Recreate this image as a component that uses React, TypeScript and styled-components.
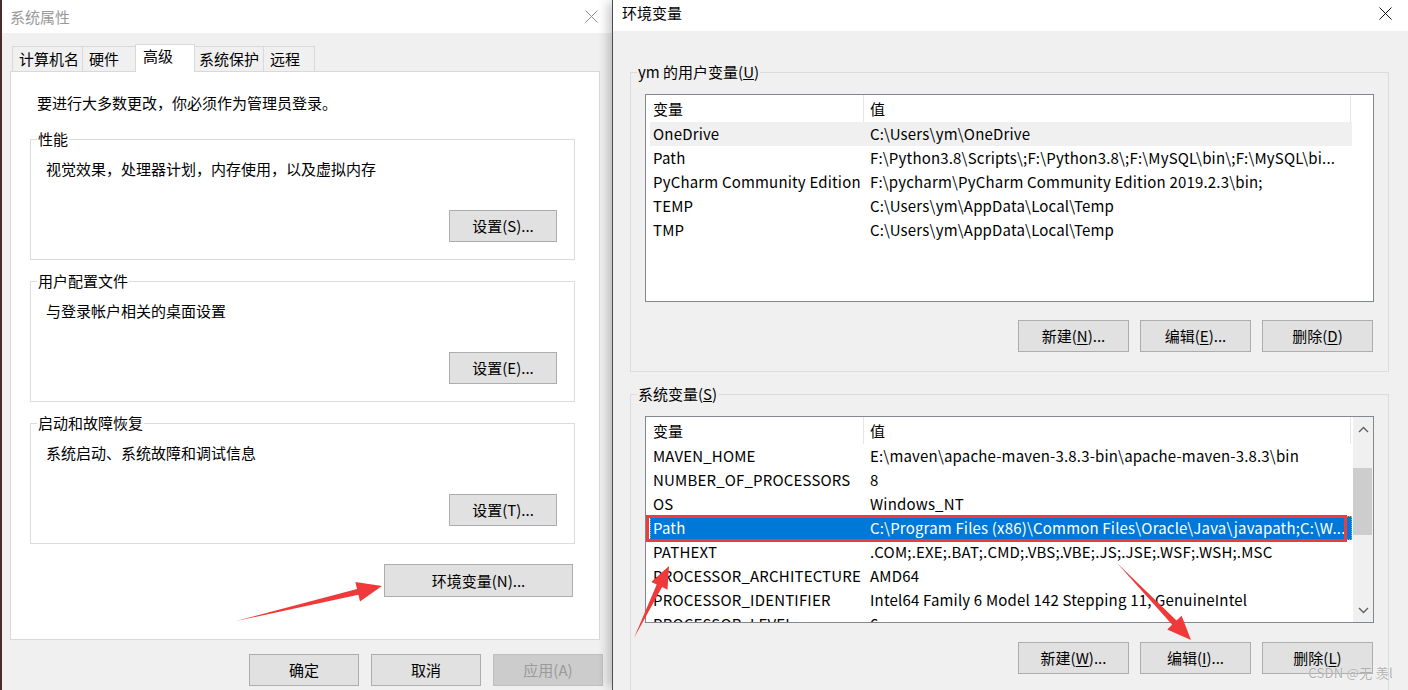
import React from 'react'
import styled, { createGlobalStyle } from 'styled-components'

const GlobalStyle = createGlobalStyle`
  html, body {
    margin: 0;
    padding: 0;
  }
  body {
    width: 1408px;
    height: 690px;
    overflow: hidden;
    background: #4b2a2a;
    font-family: 'Segoe UI', 'Noto Sans CJK SC', sans-serif;
    font-size: 15px;
    color: #000;
  }
  * {
    box-sizing: border-box;
  }
`

const Desktop = styled.div`
  position: relative;
  display: flex;
  width: 1408px;
  height: 690px;
  overflow: hidden;
  padding-left: 2px;
  background: #4b2a2a;
`

const Window = styled.div<{ $width: number; $front?: boolean }>`
  flex: none;
  width: ${({ $width }) => $width}px;
  height: 690px;
  display: flex;
  flex-direction: column;
  background: #f0f0f0;
  ${({ $front }) =>
    $front &&
    `
    border-left: 1px solid #4d4d4d;
    box-shadow: -6px 0 10px -2px rgba(0, 0, 0, 0.22);
  `}
`

const TitleBar = styled.div<{ $height: number; $padLeft: number; $padRight: number; $lift: number }>`
  flex: none;
  height: ${({ $height }) => $height}px;
  background: #fff;
  display: flex;
  align-items: center;
  justify-content: space-between;
  padding: 0 ${({ $padRight }) => $padRight}px ${({ $lift }) => $lift}px
    ${({ $padLeft }) => $padLeft}px;
`

const TitleText = styled.span<{ $inactive?: boolean }>`
  font-size: 15px;
  line-height: 20px;
  color: ${({ $inactive }) => ($inactive ? '#999999' : '#000')};
`

const CloseIcon = ({ color }: { color: string }) => (
  <svg width="13" height="13" viewBox="0 0 13 13">
    <path d="M0.5 0.5 L12.5 12.5 M12.5 0.5 L0.5 12.5" stroke={color} strokeWidth="1" fill="none" />
  </svg>
)

/* ---------- left dialog ---------- */

const LeftBody = styled.div`
  flex: 1;
  display: flex;
  flex-direction: column;
  padding-left: 8px;
`

const TabStrip = styled.div`
  display: flex;
  align-items: flex-end;
  height: 27px;
  margin: 11px 0 0 2px;
`

const Tab = styled.div<{ $width: number; $active?: boolean }>`
  flex: none;
  position: relative;
  width: ${({ $width, $active }) => ($active ? $width + 4 : $width)}px;
  height: ${({ $active }) => ($active ? 28 : 25)}px;
  margin: 0 ${({ $active }) => ($active ? -2 : 0)}px ${({ $active }) => ($active ? -1 : 0)}px;
  margin-left: ${({ $active }) => ($active ? -2 : -1)}px;
  padding: ${({ $active }) => ($active ? '1px 0 0 7px' : '2px 0 0 6px')};
  border: 1px solid #d9d9d9;
  border-bottom: none;
  background: ${({ $active }) => ($active ? '#fff' : '#f0f0f0')};
  z-index: ${({ $active }) => ($active ? 2 : 1)};
  font-size: 15px;
  line-height: 20px;
  white-space: nowrap;
  &:first-child {
    margin-left: 0;
  }
`

const TabPanel = styled.div`
  width: 590px;
  height: 569px;
  border: 1px solid #d9d9d9;
  background: #fff;
  display: flex;
  flex-direction: column;
  padding: 21px 24px 0 19px;
`

const Intro = styled.div`
  margin-left: 7px;
  line-height: 20px;
`

const GroupBox = styled.fieldset<{ $width: number; $gap: number }>`
  margin: ${({ $gap }) => $gap}px 0 0;
  padding: 0;
  min-width: 0;
  width: ${({ $width }) => $width}px;
  border: 1px solid #dcdcdc;
  flex: none;
`

const GroupLegend = styled.legend`
  margin-left: 6px;
  padding: 0 1px;
  line-height: 20px;
  font-size: 15px;
`

const GroupInner = styled.div<{ $pad: string }>`
  display: flex;
  flex-direction: column;
  padding: ${({ $pad }) => $pad};
`

const Description = styled.div`
  line-height: 20px;
`

const Button = styled.button<{ $width: number; $height?: number; $gapTop?: number }>`
  flex: none;
  width: ${({ $width }) => $width}px;
  height: ${({ $height }) => $height ?? 32}px;
  margin-top: ${({ $gapTop }) => $gapTop ?? 0}px;
  background: #e1e1e1;
  border: 1px solid #adadad;
  border-radius: 0;
  padding: 0;
  font-family: inherit;
  font-size: 15px;
  line-height: 20px;
  color: #000;
  &:disabled {
    background: #cccccc;
    border-color: #bfbfbf;
    color: #9a9a9a;
  }
  u {
    text-decoration-thickness: 1px;
    text-underline-offset: 2px;
  }
`

const RightAligned = styled.div<{ $gapTop: number; $right: number; $gap?: number }>`
  display: flex;
  justify-content: flex-end;
  gap: ${({ $gap }) => $gap ?? 0}px;
  margin-top: ${({ $gapTop }) => $gapTop}px;
  padding-right: ${({ $right }) => $right}px;
`

/* ---------- right dialog ---------- */

const RightBody = styled.div`
  flex: 1;
  display: flex;
  flex-direction: column;
  padding: 31px 0 0 17px;
`

const ListView = styled.div<{ $height: number }>`
  flex: none;
  width: 729px;
  height: ${({ $height }) => $height}px;
  border: 1px solid #828790;
  background: #fff;
  display: flex;
  overflow: hidden;
`

const ListRows = styled.div`
  width: 706px;
  padding-left: 4px;
  overflow: hidden;
`

const Row = styled.div<{ $header?: boolean; $state?: 'hover' | 'selected' }>`
  position: relative;
  display: grid;
  grid-template-columns: 214px 487px;
  height: ${({ $header }) => ($header ? 27 : 24)}px;
  align-items: center;
  background: ${({ $state }) =>
    $state === 'selected' ? '#0078d7' : $state === 'hover' ? '#f0f0f0' : 'transparent'};
  color: ${({ $state }) => ($state === 'selected' ? '#fff' : '#000')};
  ${({ $state }) =>
    $state === 'selected' &&
    `
    outline: 1px dotted #e8a33a;
    outline-offset: -1px;
  `}
`

const Cell = styled.div<{ $header?: boolean; $first?: boolean }>`
  height: 100%;
  display: flex;
  align-items: center;
  padding-left: ${({ $first }) => ($first ? 3 : 6)}px;
  line-height: 20px;
  letter-spacing: ${({ $header }) => ($header ? 0 : 0.18)}px;
  white-space: nowrap;
  overflow: hidden;
  border-right: ${({ $header }) => ($header ? '1px solid #e5e5e5' : 'none')};
`

const Annotation = styled.div`
  position: absolute;
  left: -4px;
  right: 5px;
  top: -1px;
  bottom: -2px;
  border: 3px solid #ef3b3b;
  pointer-events: none;
`

const ScrollBar = styled.div`
  flex: none;
  width: 21px;
  background: #f0f0f0;
  display: flex;
  flex-direction: column;
  border-left: 1px solid #fff;
`

const ScrollArrow = styled.div`
  height: 24px;
  display: flex;
  align-items: center;
  justify-content: center;
`

const ScrollTrack = styled.div`
  flex: 1;
  padding-top: 27px;
`

const Thumb = styled.div`
  width: 19px;
  height: 67px;
  background: #cdcdcd;
`

const Chevron = ({ up }: { up?: boolean }) => (
  <svg width="11" height="7" viewBox="0 0 11 7">
    <path
      d={up ? 'M1 6 L5.5 1.5 L10 6' : 'M1 1 L5.5 5.5 L10 1'}
      stroke="#606060"
      strokeWidth="1.4"
      fill="none"
    />
  </svg>
)

/* ---------- overlays ---------- */

const Overlay = styled.svg`
  position: absolute;
  left: 0;
  top: 0;
  width: 1408px;
  height: 690px;
  pointer-events: none;
  z-index: 10;
`

const Watermark = styled.div`
  position: absolute;
  right: 15px;
  bottom: 8px;
  font-size: 13px;
  line-height: 18px;
  color: rgba(150, 150, 150, 0.75);
  text-shadow: 0 0 1px rgba(255, 255, 255, 0.9);
  letter-spacing: 0.3px;
  z-index: 11;
`

type Variable = { name: string; value: string; state?: 'hover' | 'selected'; marked?: boolean }

const userVars: Variable[] = [
  { name: 'OneDrive', value: 'C:\\Users\\ym\\OneDrive', state: 'hover' },
  { name: 'Path', value: 'F:\\Python3.8\\Scripts\\;F:\\Python3.8\\;F:\\MySQL\\bin\\;F:\\MySQL\\bi...' },
  { name: 'PyCharm Community Edition', value: 'F:\\pycharm\\PyCharm Community Edition 2019.2.3\\bin;' },
  { name: 'TEMP', value: 'C:\\Users\\ym\\AppData\\Local\\Temp' },
  { name: 'TMP', value: 'C:\\Users\\ym\\AppData\\Local\\Temp' },
]

const systemVars: Variable[] = [
  { name: 'MAVEN_HOME', value: 'E:\\maven\\apache-maven-3.8.3-bin\\apache-maven-3.8.3\\bin' },
  { name: 'NUMBER_OF_PROCESSORS', value: '8' },
  { name: 'OS', value: 'Windows_NT' },
  {
    name: 'Path',
    value: 'C:\\Program Files (x86)\\Common Files\\Oracle\\Java\\javapath;C:\\W...',
    state: 'selected',
    marked: true,
  },
  { name: 'PATHEXT', value: '.COM;.EXE;.BAT;.CMD;.VBS;.VBE;.JS;.JSE;.WSF;.WSH;.MSC' },
  { name: 'PROCESSOR_ARCHITECTURE', value: 'AMD64' },
  { name: 'PROCESSOR_IDENTIFIER', value: 'Intel64 Family 6 Model 142 Stepping 11, GenuineIntel' },
  { name: 'PROCESSOR_LEVEL', value: '6' },
]

const VariableList = ({ rows, height, scroll }: { rows: Variable[]; height: number; scroll?: boolean }) => (
  <ListView $height={height}>
    <ListRows>
      <Row $header>
        <Cell $header $first>变量</Cell>
        <Cell $header>值</Cell>
      </Row>
      {rows.map((r) => (
        <Row key={r.name} $state={r.state}>
          <Cell $first>{r.name}</Cell>
          <Cell>{r.value}</Cell>
          {r.marked && <Annotation />}
        </Row>
      ))}
    </ListRows>
    {scroll && (
      <ScrollBar>
        <ScrollArrow>
          <Chevron up />
        </ScrollArrow>
        <ScrollTrack>
          <Thumb />
        </ScrollTrack>
        <ScrollArrow>
          <Chevron />
        </ScrollArrow>
      </ScrollBar>
    )}
  </ListView>
)

const arrow = (tail: [number, number], tip: [number, number], headLen: number, headHalf: number, shaftHalf: number) => {
  const dx = tip[0] - tail[0]
  const dy = tip[1] - tail[1]
  const len = Math.hypot(dx, dy)
  const ux = dx / len
  const uy = dy / len
  const nx = -uy
  const ny = ux
  const bx = tip[0] - ux * headLen
  const by = tip[1] - uy * headLen
  const pts = [
    tail,
    [bx + nx * shaftHalf, by + ny * shaftHalf],
    [bx + nx * headHalf, by + ny * headHalf],
    tip,
    [bx - nx * headHalf, by - ny * headHalf],
    [bx - nx * shaftHalf, by - ny * shaftHalf],
  ]
  return pts.map((p) => p.map((v) => v.toFixed(1)).join(',')).join(' ')
}

const perfGroups = [
  { title: '性能', text: '视觉效果，处理器计划，内存使用，以及虚拟内存', button: '设置(S)...', gap: 16 },
  { title: '用户配置文件', text: '与登录帐户相关的桌面设置', button: '设置(E)...', gap: 11 },
  { title: '启动和故障恢复', text: '系统启动、系统故障和调试信息', button: '设置(T)...', gap: 11 },
]

const tabs = [
  { label: '计算机名', width: 71 },
  { label: '硬件', width: 55 },
  { label: '高级', width: 56, active: true },
  { label: '系统保护', width: 72 },
  { label: '远程', width: 52 },
]

export default function App() {
  return (
    <>
      <GlobalStyle />
      <Desktop>
        <Window $width={610}>
          <TitleBar $height={33} $padLeft={8} $padRight={14} $lift={0}>
            <TitleText $inactive>系统属性</TitleText>
            <CloseIcon color="#8a8a8a" />
          </TitleBar>
          <LeftBody>
            <TabStrip>
              {tabs.map((t) => (
                <Tab key={t.label} $width={t.width} $active={t.active}>
                  {t.label}
                </Tab>
              ))}
            </TabStrip>
            <TabPanel>
              <Intro>要进行大多数更改，你必须作为管理员登录。</Intro>
              {perfGroups.map((g) => (
                <GroupBox key={g.title} $width={545} $gap={g.gap}>
                  <GroupLegend>{g.title}</GroupLegend>
                  <GroupInner $pad="10px 17px 17px 15px">
                    <Description>{g.text}</Description>
                    <RightAligned $gapTop={31} $right={0}>
                      <Button $width={108}>{g.button}</Button>
                    </RightAligned>
                  </GroupInner>
                </GroupBox>
              ))}
              <RightAligned $gapTop={20} $right={2}>
                <Button $width={189} $height={33}>
                  环境变量(N)...
                </Button>
              </RightAligned>
            </TabPanel>
            <RightAligned $gapTop={14} $right={9} $gap={12}>
              <Button $width={110}>确定</Button>
              <Button $width={110}>取消</Button>
              <Button $width={110} disabled>
                应用(A)
              </Button>
            </RightAligned>
          </LeftBody>
        </Window>

        <Window $width={796} $front>
          <TitleBar $height={31} $padLeft={9} $padRight={16} $lift={5}>
            <TitleText>环境变量</TitleText>
            <CloseIcon color="#111" />
          </TitleBar>
          <RightBody>
            <GroupBox $width={759} $gap={0}>
              <GroupLegend>
                ym 的用户变量(<u>U</u>)
              </GroupLegend>
              <GroupInner $pad="12px 14px 19px 14px">
                <VariableList rows={userVars} height={208} />
                <RightAligned $gapTop={18} $right={1} $gap={11}>
                  <Button $width={111}>
                    新建(<u>N</u>)...
                  </Button>
                  <Button $width={111}>
                    编辑(<u>E</u>)...
                  </Button>
                  <Button $width={111}>
                    删除(<u>D</u>)
                  </Button>
                </RightAligned>
              </GroupInner>
            </GroupBox>
            <GroupBox $width={759} $gap={12}>
              <GroupLegend>
                系统变量(<u>S</u>)
              </GroupLegend>
              <GroupInner $pad="12px 14px 19px 14px">
                <VariableList rows={systemVars} height={207} scroll />
                <RightAligned $gapTop={19} $right={1} $gap={11}>
                  <Button $width={111}>
                    新建(<u>W</u>)...
                  </Button>
                  <Button $width={111}>
                    编辑(<u>I</u>)...
                  </Button>
                  <Button $width={111}>
                    删除(<u>L</u>)
                  </Button>
                </RightAligned>
              </GroupInner>
            </GroupBox>
          </RightBody>
        </Window>

        <Overlay viewBox="0 0 1408 690">
          <polygon points={arrow([236, 621], [382, 586], 25, 10, 3)} fill="#f0393a" />
          <polygon points={arrow([634, 638], [669, 566], 22, 9, 3)} fill="#f0393a" />
          <polygon points={arrow([1117, 563], [1191, 640], 24, 10, 3)} fill="#f0393a" />
        </Overlay>
        <Watermark>CSDN @无 羡l</Watermark>
      </Desktop>
    </>
  )
}
